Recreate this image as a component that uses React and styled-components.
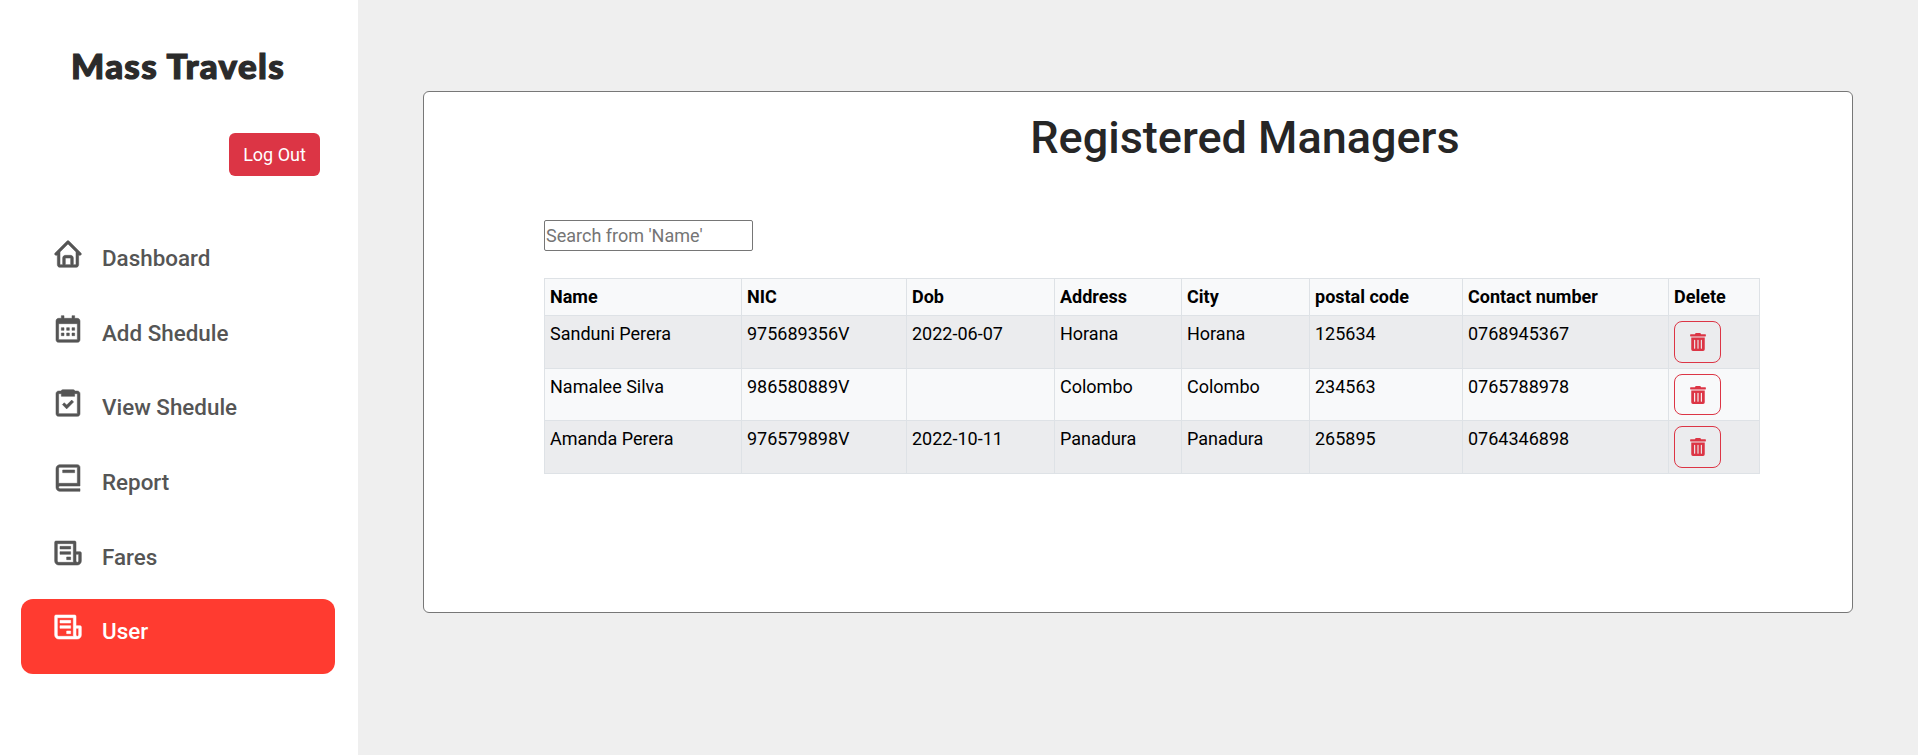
import React from 'react';
import styled, { createGlobalStyle } from 'styled-components';
import { BiHome, BiCalendar, BiTask, BiBook, BiReceipt } from 'react-icons/bi';
import { FaTrashAlt } from 'react-icons/fa';

const Global = createGlobalStyle`
  html, body { margin: 0; padding: 0; background: #efefef; }
  body { font-family: Roboto, "Liberation Sans", sans-serif; font-size: 16px; color: #000; }
  * { box-sizing: border-box; }
`;

const Page = styled.div`
  display: flex;
  height: 755px;
  overflow: hidden;
`;

const Sidebar = styled.aside`
  width: 358px;
  flex: none;
  background: #fff;
  padding: 0 23px 0 21px;
  display: flex;
  flex-direction: column;
`;

const Logo = styled.h1`
  margin: 46px 0 0;
  height: 38px;
  text-align: center;
  font-family: Lato, sans-serif;
  font-weight: 900;
  font-size: 35px;
  line-height: 38px;
  letter-spacing: 1.3px;
  color: #2b2b2b;
  -webkit-text-stroke: 1.2px #2b2b2b;
`;

const LogoutRow = styled.div`
  display: flex;
  justify-content: flex-end;
  margin: 49px 15px 0 0;
`;

const Logout = styled.button`
  width: 91px;
  height: 43px;
  padding: 0;
  border: none;
  border-radius: 6px;
  background: #dc3545;
  color: #fff;
  font: 400 18px Roboto, sans-serif;
`;

const Nav = styled.nav`
  display: flex;
  flex-direction: column;
  margin-top: 50px;
`;

const NavItem = styled.a`
  display: flex;
  align-items: flex-start;
  height: 74.7px;
  padding: 18px 0 0 31px;
  gap: 18px;
  border-radius: 12px;
  font-size: 22.4px;
  font-weight: 500;
  line-height: 28px;
  color: ${p => (p.$active ? '#fff' : '#555555')};
  background: ${p => (p.$active ? '#ff3b30' : 'transparent')};
  svg { flex: none; margin-top: -6px; }
`;

const Main = styled.main`
  flex: 1;
  padding: 91px 66px 0 65px;
`;

const Card = styled.section`
  height: 522px;
  background: #fff;
  border: 1px solid #777;
  border-radius: 6px;
  padding: 20px 92px 0 120px;
`;

const Title = styled.h2`
  margin: 0;
  padding-left: 186px;
  text-align: center;
  font-size: 45px;
  font-weight: 500;
  line-height: 52px;
  color: #262626;
`;

const Search = styled.input`
  display: block;
  width: 209px;
  height: 31px;
  margin: 56px 0 27px;
  padding: 0 1px;
  border: 1px solid #767676;
  border-radius: 2px;
  font: 400 18px Roboto, sans-serif;
  &::placeholder { color: #757575; opacity: 1; }
`;

const Table = styled.table`
  width: 1215px;
  table-layout: fixed;
  border-collapse: collapse;
  color: #000;
`;

const Th = styled.th`
  padding: 6px 5px;
  height: 37px;
  text-align: left;
  font-weight: 700;
  font-size: 18px;
  line-height: 24px;
  border: 1px solid #dee2e6;
  background: #f8f9fa;
`;

const Td = styled.td`
  padding: 5px;
  font-size: 18px;
  line-height: 26px;
  vertical-align: top;
  border: 1px solid #dee2e6;
  background: ${p => (p.$odd ? '#ebecee' : '#f8f9fa')};
`;

const DeleteBtn = styled.button`
  display: flex;
  align-items: center;
  justify-content: center;
  width: 47px;
  height: ${p => (p.$compact ? 41 : 42)}px;
  padding: 0;
  border: 1px solid #dc3545;
  border-radius: 8px;
  background: transparent;
  color: #dc3545;
`;

const items = [
  ['Dashboard', BiHome],
  ['Add Shedule', BiCalendar],
  ['View Shedule', BiTask],
  ['Report', BiBook],
  ['Fares', BiReceipt],
  ['User', BiReceipt],
];

const cols = [
  ['Name', 197], ['NIC', 165], ['Dob', 148], ['Address', 127],
  ['City', 128], ['postal code', 153], ['Contact number', 206], ['Delete', 91],
];

const rows = [
  ['Sanduni Perera', '975689356V', '2022-06-07', 'Horana', 'Horana', '125634', '0768945367'],
  ['Namalee Silva', '986580889V', '', 'Colombo', 'Colombo', '234563', '0765788978'],
  ['Amanda Perera', '976579898V', '2022-10-11', 'Panadura', 'Panadura', '265895', '0764346898'],
];

export default function App() {
  return (
    <Page>
      <Global />
      <Sidebar>
        <Logo>Mass Travels</Logo>
        <LogoutRow><Logout>Log Out</Logout></LogoutRow>
        <Nav>
          {items.map(([label, Icon]) => (
            <NavItem key={label} $active={label === 'User'}>
              <Icon size={32} stroke="currentColor" strokeWidth={0.4} />
              <span>{label}</span>
            </NavItem>
          ))}
        </Nav>
      </Sidebar>
      <Main>
        <Card>
          <Title>Registered Managers</Title>
          <Search placeholder="Search from 'Name'" />
          <Table>
            <colgroup>
              {cols.map(([n, w]) => <col key={n} width={w} />)}
            </colgroup>
            <thead>
              <tr>{cols.map(([n]) => <Th key={n}>{n}</Th>)}</tr>
            </thead>
            <tbody>
              {rows.map((r, i) => (
                <tr key={r[0]}>
                  {r.map((c, j) => <Td key={j} $odd={i % 2 === 0}>{c}</Td>)}
                  <Td $odd={i % 2 === 0}>
                    <DeleteBtn $compact={i === 1} aria-label="Delete"><FaTrashAlt size={18} /></DeleteBtn>
                  </Td>
                </tr>
              ))}
            </tbody>
          </Table>
        </Card>
      </Main>
    </Page>
  );
}
